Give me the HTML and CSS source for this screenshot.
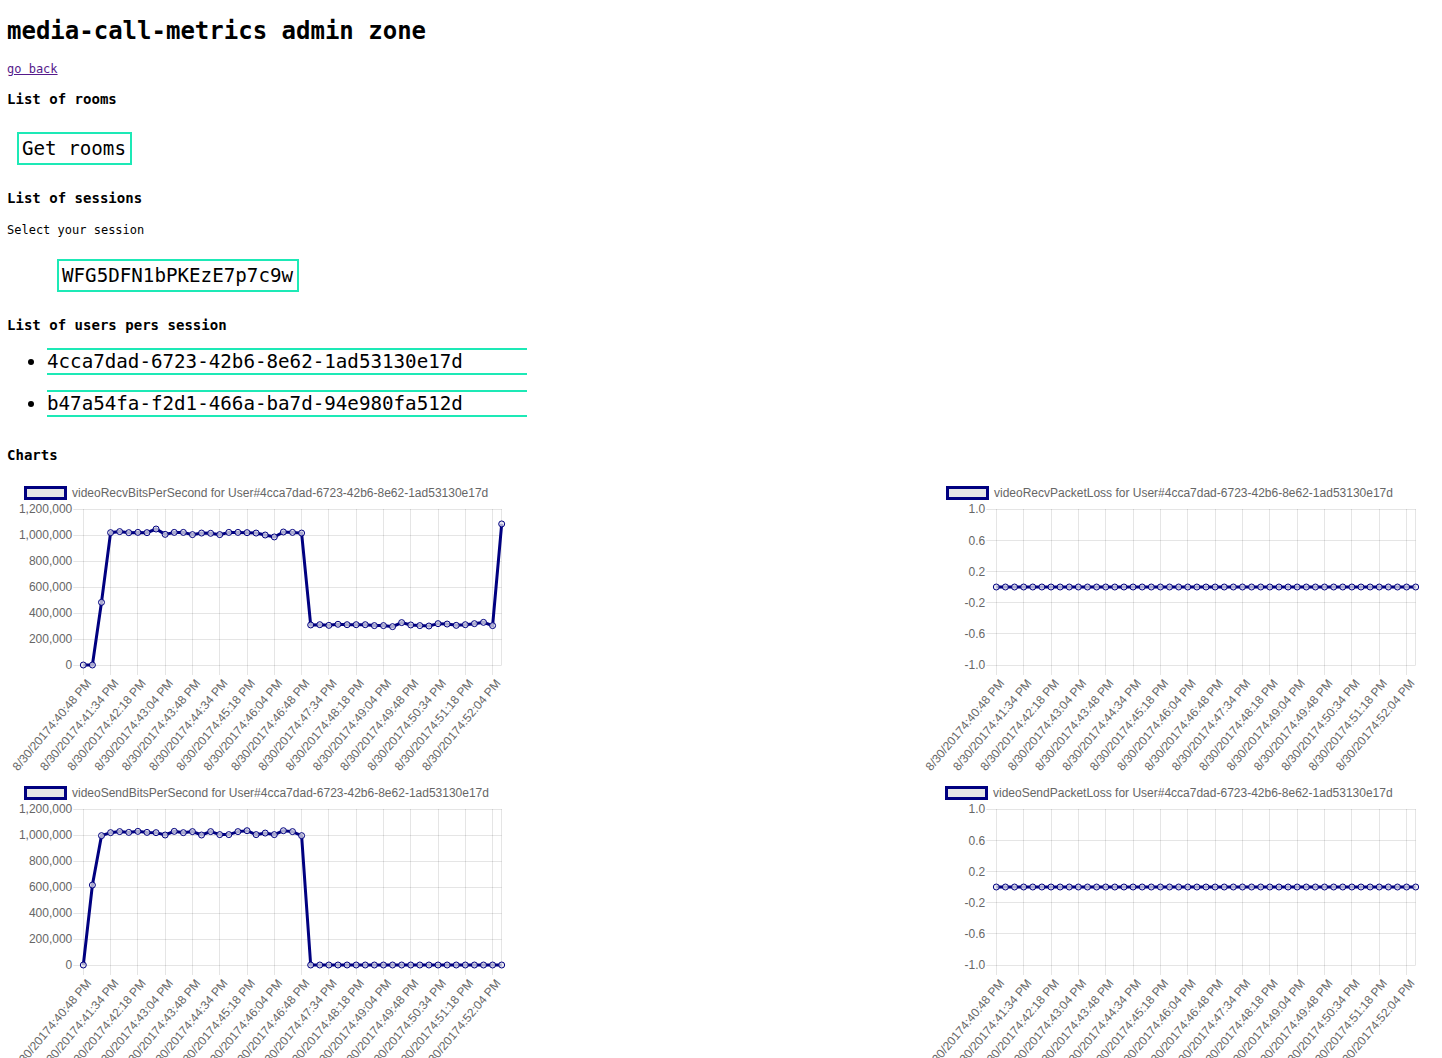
FILE: index.html
```html
<!DOCTYPE html>
<html>
<head>
<meta charset="utf-8">
<title>media-call-metrics admin zone</title>
<link rel="stylesheet" href="styles.css">
</head>
<body>
<h1>media-call-metrics admin zone</h1>
<p class="nav"><a class="back" href="#">go back</a></p>
<h3>List of rooms</h3>
<div class="rooms"><button class="btn">Get rooms</button></div>
<h3>List of sessions</h3>
<p class="hint">Select your session</p>
<ul class="sessions"><li><button class="btn">WFG5DFN1bPKEzE7p7c9w</button></li></ul>
<h3>List of users pers session</h3>
<ul class="users">
  <li>4cca7dad-6723-42b6-8e62-1ad53130e17d</li>
  <li>b47a54fa-f2d1-466a-ba7d-94e980fa512d</li>
</ul>
<h3 class="charts-title">Charts</h3>
<div class="charts">
  <svg class="chart" id="c1" width="500" height="300" xmlns="http://www.w3.org/2000/svg"></svg>
  <svg class="chart" id="c2" width="500" height="300" xmlns="http://www.w3.org/2000/svg"></svg>
  <svg class="chart" id="c3" width="500" height="300" xmlns="http://www.w3.org/2000/svg"></svg>
  <svg class="chart" id="c4" width="500" height="300" xmlns="http://www.w3.org/2000/svg"></svg>
</div>
<script src="script.js"></script>
</body>
</html>
```

FILE: styles.css
```css
body {
  margin: 8px 8px 8px 7px;
  font-family: "DejaVu Sans Mono", monospace;
  font-size: 12px;
  color: #000;
  background: #fff;
}
h1 {
  font-size: 24px;
  margin: 9px 0 17px;
}
h3 {
  font-size: 14.04px;
  margin: 14px 0;
}
.nav {
  margin: 12px 0 15px;
}
.back {
  color: #551a8b;
}
.hint {
  margin: 17px 0 12px;
}
.btn {
  font-family: "DejaVu Sans Mono", monospace;
  font-size: 19.2px;
  line-height: normal;
  color: #000;
  background: #fff;
  border: 2px solid #1de9b6;
  border-radius: 0;
  padding: 3px 4px 3px 3px;
  margin: 10px;
}
.rooms {
  margin: 15px 0;
}
.sessions {
  list-style: none;
  margin: 12px 0 15px;
  padding-left: 40px;
}
.users {
  margin: 15px 0 30px;
  padding-left: 40px;
}
.users li {
  width: 480px;
  font-size: 19.2px;
  border-top: 2px solid #1de9b6;
  border-bottom: 2px solid #1de9b6;
  margin-bottom: 15px;
}
.charts-title {
  margin-bottom: 13px;
}
.charts {
  display: grid;
  grid-template-columns: 500px 500px;
  justify-content: space-between;
  padding-right: 14px;
}
.chart {
  display: block;
  font-family: "Liberation Sans", Arial, sans-serif;
  font-size: 12px;
}
.chart .grid {
  stroke: rgba(0, 0, 0, 0.1);
  stroke-width: 1;
}
.chart .lbl {
  fill: #666;
}
.chart .series {
  fill: none;
  stroke: #000080;
  stroke-width: 3;
}
.chart .pt {
  fill: rgba(225, 225, 235, 0.75);
  stroke: #000080;
  stroke-width: 1;
}
.chart .lgbox {
  fill: rgba(220, 220, 220, 0.7);
  stroke: #000080;
  stroke-width: 3;
}
```

FILE: script.js
```js
(function () {
  var NS = 'http://www.w3.org/2000/svg';
  function el(tag, attrs, parent) {
    var e = document.createElementNS(NS, tag);
    for (var k in attrs) e.setAttribute(k, attrs[k]);
    if (parent) parent.appendChild(e);
    return e;
  }
  var times = ['40:48', '41:34', '42:18', '43:04', '43:48', '44:34', '45:18', '46:04',
    '46:48', '47:34', '48:18', '49:04', '49:48', '50:34', '51:18', '52:04'];
  var user = '4cca7dad-6723-42b6-8e62-1ad53130e17d';
  var recv = [0, 0, 482, 1018, 1026, 1018, 1020, 1018, 1046, 1005, 1020, 1020, 1003, 1015, 1013, 1003,
    1020, 1020, 1018, 1015, 1000, 985, 1023, 1020, 1015, 308, 310, 305, 313, 310, 310, 310, 303,
    303, 295, 326, 308, 303, 300, 318, 315, 305, 310, 318, 328, 303, 1085];
  var send = [0, 615, 995, 1018, 1026, 1020, 1028, 1020, 1018, 1000, 1028, 1018, 1026, 1000, 1026,
    1003, 1003, 1026, 1033, 1003, 1015, 1003, 1033, 1026, 995];
  while (send.length < 47) send.push(0);
  var zeros = [];
  for (var i = 0; i < 47; i++) zeros.push(0);

  function big(v) { return String(v).replace(/\B(?=(\d{3})+(?!\d))/g, ','); }

  var bitTicks = [1200000, 1000000, 800000, 600000, 400000, 200000, 0];
  var lossTicks = [1.0, 0.6, 0.2, -0.2, -0.6, -1.0];

  var charts = [
    { id: 'c1', name: 'videoRecvBitsPerSecond', data: recv.map(function (v) { return v * 1000; }),
      ticks: bitTicks, fmt: big, x0: 76.3, x1: 494.7 },
    { id: 'c2', name: 'videoRecvPacketLoss', data: zeros, ticks: lossTicks,
      fmt: function (v) { return v.toFixed(1); }, x0: 76.3, x1: 495.7 },
    { id: 'c3', name: 'videoSendBitsPerSecond', data: send.map(function (v) { return v * 1000; }),
      ticks: bitTicks, fmt: big, x0: 76.3, x1: 494.7 },
    { id: 'c4', name: 'videoSendPacketLoss', data: zeros, ticks: lossTicks,
      fmt: function (v) { return v.toFixed(1); }, x0: 76.3, x1: 495.7 }
  ];

  charts.forEach(function (c) {
    var svg = document.getElementById(c.id);
    var y0 = 33, y1 = 189;
    var max = c.ticks[0], min = c.ticks[c.ticks.length - 1];
    var n = c.data.length;
    var dx = (c.x1 - c.x0) / (n - 1);
    function py(v) { return y1 - (v - min) / (max - min) * (y1 - y0); }
    function px(i) { return c.x0 + i * dx; }

    // legend
    var txt = el('text', { 'class': 'lbl', y: 20.5 }, svg);
    txt.textContent = c.name + ' for User#' + user;
    var tw = txt.getComputedTextLength();
    var total = 40 + 6 + tw;
    var lx = Math.round((500 - total) / 2);
    el('rect', { 'class': 'lgbox', x: lx - 0.5, y: 11.5, width: 40, height: 11 }, svg);
    txt.setAttribute('x', lx + 46);

    // horizontal grid + y labels
    c.ticks.forEach(function (t, k) {
      var y = y0 + k * (y1 - y0) / (c.ticks.length - 1);
      var yy = Math.floor(y) + 0.5;
      el('line', { 'class': 'grid', x1: c.x0 - 10, x2: c.x1, y1: yy, y2: yy }, svg);
      var l = el('text', { 'class': 'lbl', x: c.x0 - 11, y: y + 4.3, 'text-anchor': 'end' }, svg);
      l.textContent = c.fmt(t);
    });
    // vertical grid + x labels
    for (var k = 0; k < times.length; k++) {
      var x = px(k * 3);
      var xx = Math.floor(x) + 0.5;
      el('line', { 'class': 'grid', x1: xx, x2: xx, y1: y0, y2: y1 + 10 }, svg);
      var tx = x + 5.5, ty = y1 + 16;
      var lab = el('text', { 'class': 'lbl', x: tx, y: ty, 'text-anchor': 'end',
        'dominant-baseline': 'central', transform: 'rotate(-50 ' + tx + ' ' + ty + ')' }, svg);
      lab.textContent = '8/30/20174:' + times[k] + ' PM';
    }
    var xr = Math.floor(c.x1) + 0.5;
    el('line', { 'class': 'grid', x1: xr, x2: xr, y1: y0, y2: y1 }, svg);

    // series
    var pts = c.data.map(function (v, i) { return px(i).toFixed(2) + ',' + py(v).toFixed(2); }).join(' ');
    el('polyline', { 'class': 'series', points: pts }, svg);
    c.data.forEach(function (v, i) {
      el('circle', { 'class': 'pt', cx: px(i), cy: py(v), r: 3 }, svg);
    });
  });
})();
```
